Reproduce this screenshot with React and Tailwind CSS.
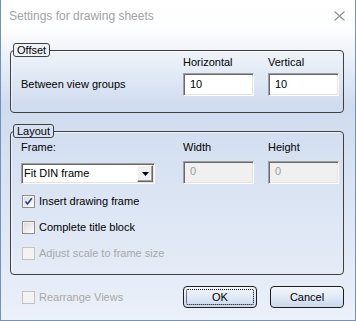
import React from "react";

const sunken =
  "border border-t-[#a0a0a0] border-l-[#a0a0a0] border-r-white border-b-white shadow-[inset_1px_1px_0_#696969,inset_-1px_-1px_0_#e3e3e3]";

function GroupBox({ title, className, labelBg, children }) {
  return (
    <div
      className={`relative ml-[9px] mr-[11px] rounded-[4px] border border-[#404040] shadow-[inset_1px_1px_0_rgba(255,255,255,0.6)] ${className}`}
    >
      <span
        className={`absolute left-[2px] -top-[8px] rounded-[3px] border border-[#404040] px-[3px] leading-[12px] ${labelBg}`}
      >
        {title}
      </span>
      {children}
    </div>
  );
}

function Check({ checked, disabled, label }) {
  return (
    <div className="flex h-[13px] items-center gap-[4px]">
      <span
        className={`flex h-[13px] w-[13px] shrink-0 items-center justify-center border ${
          disabled
            ? "border-[#c2c2c2] bg-[#f3f3f3]"
            : "border-[#8e8f8f] bg-[linear-gradient(135deg,#d6d6d6,#ffffff)] shadow-[inset_1px_1px_0_#f4f4f4]"
        }`}
      >
        {checked && (
          <svg width="9" height="9" viewBox="0 0 9 9">
            <path
              d="M1.5 4.5 L3.5 7 L7.8 1.2"
              fill="none"
              stroke="#21409a"
              strokeWidth="1.6"
            />
          </svg>
        )}
      </span>
      <span className={disabled ? "text-[#a8a8a8]" : "text-black"}>
        {label}
      </span>
    </div>
  );
}

function Field({ value, disabled }) {
  return (
    <div
      className={`flex h-[23px] w-[71px] pl-[6px] ${sunken} ${
        disabled
          ? "items-start bg-[#f0f0f0] pt-[3px] text-[#9c9c9c]"
          : "items-center bg-white text-black"
      }`}
    >
      {value}
    </div>
  );
}

function Button({ children, focused }) {
  return (
    <button className="flex h-[22px] w-[74px] items-center justify-center rounded-[4px] border border-[#1e1e1e] bg-[linear-gradient(180deg,#f3f6fb_0%,#e1e9f5_50%,#c9d8ee_100%)] p-[2px] text-black">
      <span
        className={`flex h-full w-full items-center justify-center rounded-[2px] ${
          focused ? "border border-dotted border-black" : ""
        }`}
      >
        {children}
      </span>
    </button>
  );
}

export default function App() {
  return (
    <div className="flex h-[321px] w-[356px] flex-col border-x border-b border-[#7491b6] bg-[linear-gradient(180deg,#ffffff_0%,#fdfeff_9%,#cfdcef_33%,#ebf0f9_100%)] font-['Liberation_Sans',Arial,sans-serif] text-[11px] leading-[13px] text-black">
      {/* title bar */}
      <div className="flex h-[30px] shrink-0 items-center justify-between pl-[8px] pr-[10px] pt-[2px]">
        <span className="text-[12px] text-[#a3a3a3]">
          Settings for drawing sheets
        </span>
        <svg width="11" height="10" viewBox="0 0 11 10">
          <path d="M0.5 0.5 L10.5 9.5 M10.5 0.5 L0.5 9.5" stroke="#8f8f8f" strokeWidth="1.1" />
        </svg>
      </div>

      {/* Offset */}
      <GroupBox
        title="Offset"
        labelBg="bg-[#eef3fa]"
        className="mt-[20px] pb-[16px] pl-[10px] pt-[5px]"
      >
        <div className="grid grid-cols-[148px_71px_71px] items-center gap-x-[14px] gap-y-[4px]">
          <span />
          <span>Horizontal</span>
          <span>Vertical</span>
          <span>Between view groups</span>
          <Field value="10" />
          <Field value="10" />
        </div>
      </GroupBox>

      {/* Layout */}
      <GroupBox
        title="Layout"
        labelBg="bg-[#d6e2f2]"
        className="mt-[18px] pb-[14px] pl-[10px] pt-[9px]"
      >
        <div className="grid grid-cols-[148px_71px_71px] items-start gap-x-[14px] gap-y-[7px]">
          <span>Frame:</span>
          <span>Width</span>
          <span>Height</span>
          <div
            className={`mt-[2px] flex h-[21px] w-[134px] items-center bg-white ${sunken}`}
          >
            <span className="flex-1 pl-[2px]">Fit DIN frame</span>
            <span className="mr-[1px] flex h-[17px] w-[16px] items-center justify-center border border-t-white border-l-white border-r-[#696969] border-b-[#696969] bg-[#f0f0f0] shadow-[inset_-1px_-1px_0_#a0a0a0]">
              <svg width="7" height="4" viewBox="0 0 7 4">
                <path d="M0 0 H7 L3.5 4 Z" fill="#000" />
              </svg>
            </span>
          </div>
          <Field value="0" disabled />
          <Field value="0" disabled />
        </div>
        <div className="ml-[1px] mt-[11px] flex flex-col gap-[13px]">
          <Check checked label="Insert drawing frame" />
          <Check label="Complete title block" />
          <Check disabled label="Adjust scale to frame size" />
        </div>
      </GroupBox>

      {/* bottom row */}
      <div className="mt-[11px] flex items-center pl-[21px] pr-[11px]">
        <div className="flex-1">
          <Check disabled label="Rearrange Views" />
        </div>
        <div className="flex gap-[13px]">
          <Button focused>OK</Button>
          <Button>Cancel</Button>
        </div>
      </div>
    </div>
  );
}
